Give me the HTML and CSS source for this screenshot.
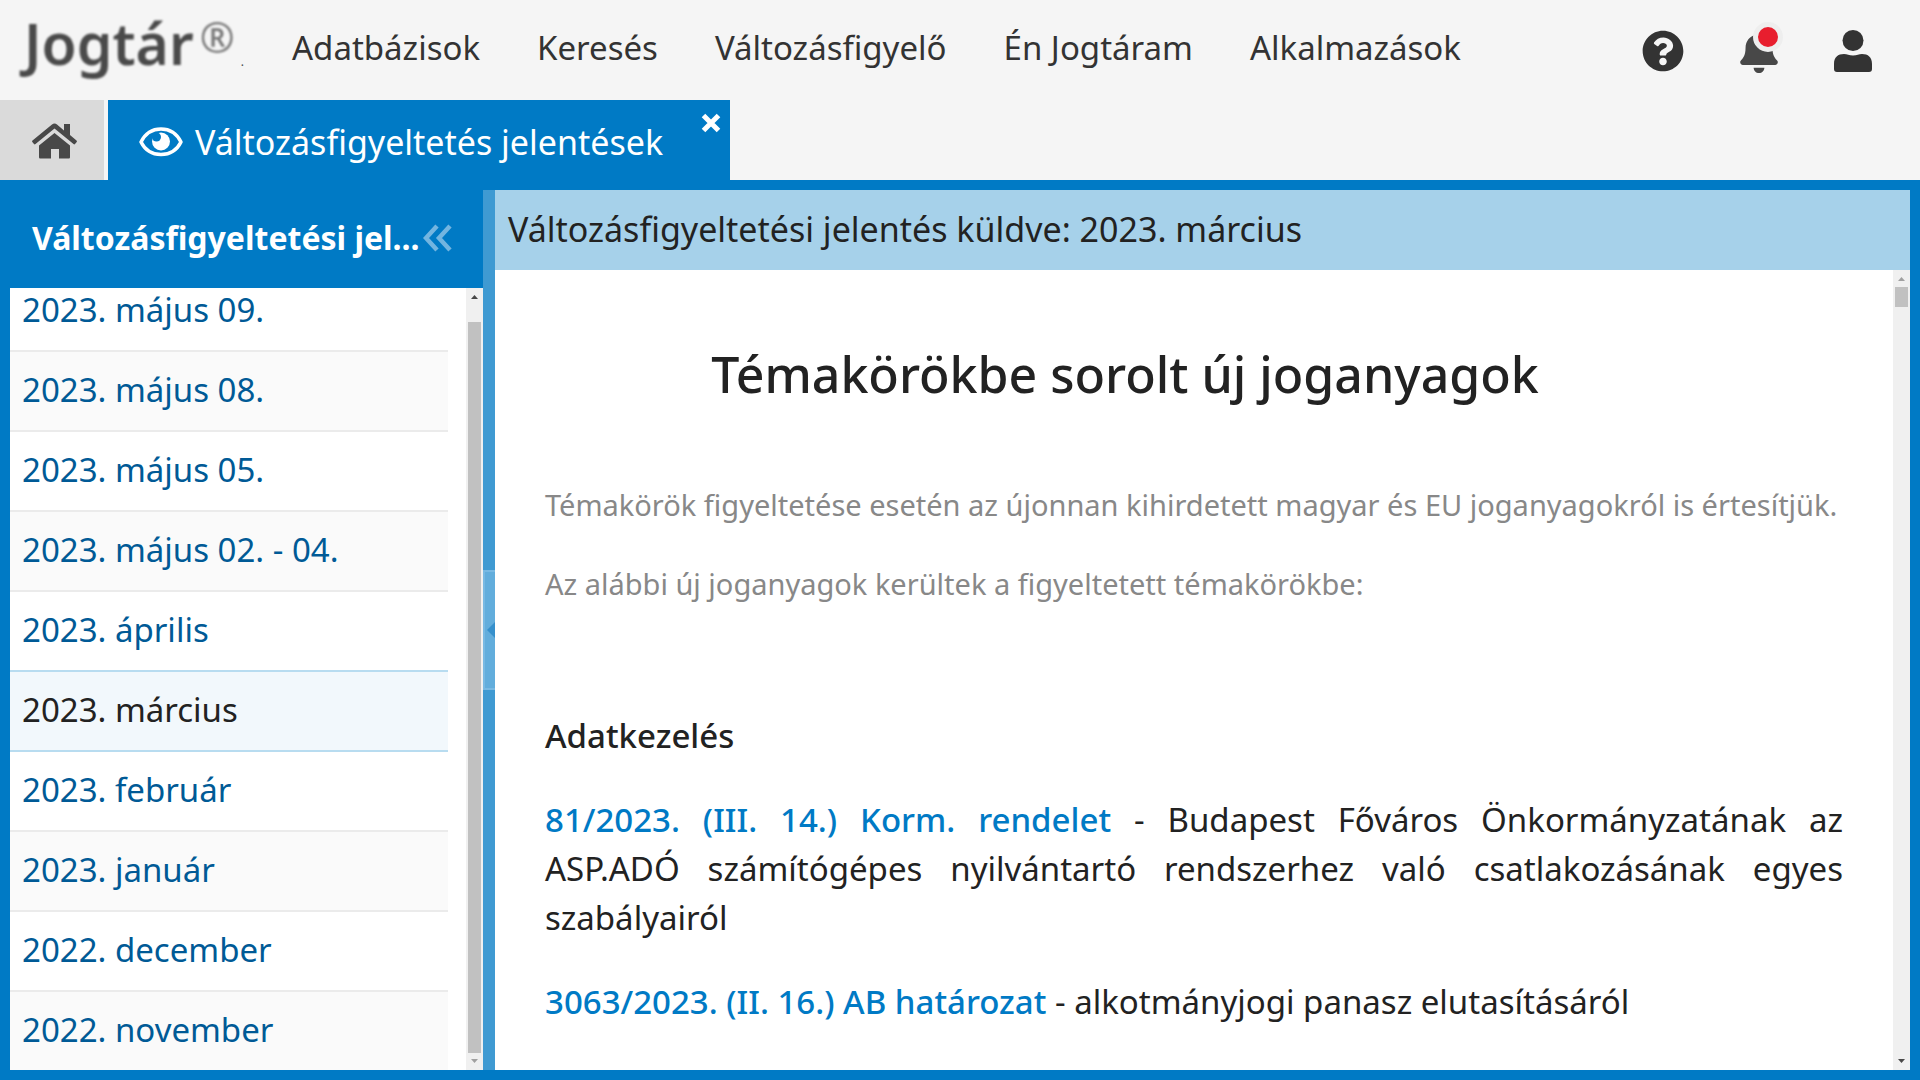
FILE: index.html
```html
<!DOCTYPE html>
<html lang="hu">
<head>
<meta charset="utf-8">
<title>Jogtár – Változásfigyeltetés jelentések</title>
<link rel="stylesheet" href="styles.css">
</head>
<body>
<header class="topbar">
  <a class="logo" href="#"><span class="logo-name">Jogtár</span><span class="logo-mark">®</span><span class="logo-dot">.</span></a>
  <nav class="menu">
    <a href="#">Adatbázisok</a>
    <a href="#">Keresés</a>
    <a href="#">Változásfigyelő</a>
    <a href="#">Én Jogtáram</a>
    <a href="#">Alkalmazások</a>
  </nav>
  <div class="tools">
    <button class="tool" type="button" aria-label="Súgó">
      <svg width="42" height="42" viewBox="0 0 512 512"><path fill="#333" d="M504 256c0 137-111 248-248 248S8 393 8 256 119 8 256 8s248 111 248 248zM262.700 90c-54.500 0-89.300 23-116.500 63.800-3.500 5.300-2.400 12.400 2.700 16.300l34.700 26.300c5.200 3.900 12.600 3 16.700-2.100 17.900-22.700 30.100-35.800 57.300-35.800 20.400 0 45.700 13.100 45.700 33 0 15-12.400 22.700-32.500 34C247.100 238.500 216 254.900 216 296v4c0 6.600 5.400 12 12 12h56c6.600 0 12-5.400 12-12v-1.300c0-28.500 83.200-29.600 83.200-106.700 0-58-60.200-102-116.500-102zM256 338c-25.400 0-46 20.600-46 46s20.600 46 46 46 46-20.600 46-46-20.600-46-46-46z"/></svg>
    </button>
    <button class="tool" type="button" aria-label="Értesítések">
      <svg width="38" height="43" viewBox="0 0 448 512"><path fill="#484848" d="M224 512c35.300 0 63.900-28.600 63.900-64H160.100c0 35.400 28.600 64 63.900 64zm215.400-149.700c-19.300-20.800-55.500-52-55.500-154.300 0-77.700-54.500-139.900-127.900-155.200V32c0-17.700-14.300-32-32-32s-32 14.300-32 32v20.800C118.600 68.100 64.100 130.300 64.100 208c0 102.300-36.200 133.500-55.500 154.300-6 6.400-8.700 14.100-8.600 21.700.1 16.400 13 32 32.100 32h383.800c19.100 0 32-15.600 32.100-32 .1-7.600-2.600-15.300-8.600-21.700z"/><path fill="#f5f5f5" d="M0 416h448v26H0z"/></svg>
      <span class="badge"></span>
    </button>
    <button class="tool" type="button" aria-label="Profil">
      <svg width="38" height="42" viewBox="0 0 38 42"><g fill="#333"><circle cx="19" cy="10.500" r="10.500"/><path d="M0 36v-2c0-7 4-10 10-10 3 0 5 1.500 9 1.500s6-1.500 9-1.500c6 0 10 3 10 10v5c0 2-1 3-3 3H3c-2 0-3-1-3-3z"/></g></svg>
    </button>
  </div>
</header>
<div class="tabs">
  <a class="tab-home" href="#" aria-label="Kezdőlap">
    <svg width="45" height="36" viewBox="0 0 45 36"><g fill="#484848"><path d="M22.500 10 38 22.500V34c0 1-.5 1.500-1.500 1.500H27V26h-8v9.500H8.500C7.500 35.500 7 35 7 34V22.500z"/><path d="M32 1h6v11l6.500 5.500c.6.500.6 1 .2 1.500l-1.700 2c-.4.500-1 .5-1.500 0L22.500 5.500 3.500 21c-.5.500-1.100.5-1.500 0l-1.700-2c-.4-.5-.4-1 .2-1.500L20 1.400c1.500-1.200 3.500-1.200 5 0l7 6z"/></g></svg>
  </a>
  <div class="tab">
    <svg width="44" height="30" viewBox="0 0 44 30"><path d="M2 15C6 7 13 2 22 2s16 5 20 13c-4 8-11 12.500-20 12.500S6 23 2 15z" fill="none" stroke="#fff" stroke-width="3.500" stroke-linejoin="round"/><circle cx="22" cy="14.500" r="9" fill="#fff"/><circle cx="17.500" cy="10" r="4.500" fill="#007ac5"/></svg>
    <span>Változásfigyeltetés jelentések</span>
    <button class="tab-close" type="button" aria-label="Bezárás"><svg width="20" height="20" viewBox="0 0 20 20"><path d="M2.500 2.500l15 15M17.500 2.500l-15 15" stroke="#fff" stroke-width="5"/></svg></button>
  </div>
</div>
<div class="frame">
  <aside class="sidebar">
    <div class="sidebar-head">
      <h2>Változásfigyeltetési jel...</h2>
      <button class="collapse" type="button" aria-label="Összecsukás"><svg width="30" height="28" viewBox="0 0 30 28"><path d="M14 2 3 14l11 12M27 2 16 14l11 12" fill="none" stroke="#73b5e0" stroke-width="4.500"/></svg></button>
    </div>
    <div class="list-pane">
      <ul class="reports">
        <li><a href="#">2023. május 09.</a></li>
        <li><a href="#">2023. május 08.</a></li>
        <li><a href="#">2023. május 05.</a></li>
        <li><a href="#">2023. május 02. - 04.</a></li>
        <li class="above"><a href="#">2023. április</a></li>
        <li class="current"><a href="#">2023. március</a></li>
        <li><a href="#">2023. február</a></li>
        <li><a href="#">2023. január</a></li>
        <li><a href="#">2022. december</a></li>
        <li><a href="#">2022. november</a></li>
      </ul>
      <div class="scroll scroll-end">
        <svg class="arrow" width="7" height="4" viewBox="0 0 7 4"><path d="M0 4 3.500 0 7 4z"/></svg>
        <div class="thumb"></div>
        <svg class="arrow dim" width="7" height="4" viewBox="0 0 7 4"><path d="M0 0h7L3.500 4z"/></svg>
      </div>
    </div>
  </aside>
  <div class="splitter">
    <button class="grip" type="button" aria-label="Panel elrejtése"><svg width="8" height="16" viewBox="0 0 8 16"><path d="M8 0v16L0 8z" fill="#3690cc"/></svg></button>
  </div>
  <main class="report">
    <div class="report-bar">Változásfigyeltetési jelentés küldve: 2023. március</div>
    <div class="report-pane">
      <article class="doc">
        <h1>Témakörökbe sorolt új joganyagok</h1>
        <p class="note">Témakörök figyeltetése esetén az újonnan kihirdetett magyar és EU joganyagokról is értesítjük.</p>
        <p class="note">Az alábbi új joganyagok kerültek a figyeltetett témakörökbe:</p>
        <h3>Adatkezelés</h3>
        <p class="item"><a href="#">81/2023. (III. 14.) Korm. rendelet</a> - Budapest Főváros Önkormányzatának az ASP.ADÓ számítógépes nyilvántartó rendszerhez való csatlakozásának egyes szabályairól</p>
        <p class="item"><a href="#">3063/2023. (II. 16.) AB határozat</a> - alkotmányjogi panasz elutasításáról</p>
      </article>
      <div class="scroll">
        <svg class="arrow dim" width="7" height="4" viewBox="0 0 7 4"><path d="M0 4 3.500 0 7 4z"/></svg>
        <div class="thumb"></div>
        <svg class="arrow" width="7" height="4" viewBox="0 0 7 4"><path d="M0 0h7L3.500 4z"/></svg>
      </div>
    </div>
  </main>
</div>
</body>
</html>
```
FILE: styles.css
```css
* { box-sizing: border-box; }
body {
  margin: 0;
  height: 100vh;
  display: flex;
  flex-direction: column;
  overflow: hidden;
  background: #f5f5f5;
  color: #222;
  font-family: "Noto Sans", "Open Sans", sans-serif;
  font-size: 33px;
  line-height: 48px;
}
a { color: inherit; text-decoration: none; }
button { padding: 0; border: 0; background: none; font: inherit; color: inherit; }
h1, h2, h3, p, ul { margin: 0; padding: 0; }
svg { display: block; }

.topbar { flex: none; display: flex; height: 100px; padding: 0 48px 0 24px; }
.logo { display: flex; gap: 6px; width: 268px; color: #4a4a4a; }
.logo-name { font-size: 57px; font-weight: 600; line-height: 86px; filter: blur(1px); }
.logo-mark { color: #777; font-size: 42px; line-height: 74px; filter: blur(1px); }
.logo-dot { font-size: 12px; line-height: 124px; }
.menu { display: flex; gap: 57px; color: #333; line-height: 96px; white-space: nowrap; }
.tools { display: flex; gap: 56px; margin-left: auto; padding-top: 2px; align-items: center; }
.tool { position: relative; }
.badge {
  position: absolute;
  top: -8px;
  right: -5px;
  width: 30px;
  height: 30px;
  border: 5px solid #eee;
  border-radius: 50%;
  background: #e81e2e;
}

.tabs { flex: none; display: flex; gap: 4px; height: 80px; }
.tab-home { display: flex; width: 104px; align-items: center; justify-content: center; padding: 2px 0 0 5px; background: #dadada; }
.tab { position: relative; display: flex; gap: 12px; align-items: center; padding: 4px 67px 0 31px; background: #007ac5; color: #fff; font-size: 34px; white-space: nowrap; }
.tab-close { position: absolute; top: 13px; right: 9px; }

.frame { flex: 1; min-height: 0; display: flex; padding: 10px; background: #007ac5; }
.sidebar { flex: none; display: flex; flex-direction: column; width: 473px; }
.sidebar-head { flex: none; display: flex; gap: 4px; align-items: center; height: 98px; padding: 0 30px 3px 22px; color: #fff; }
.sidebar-head h2 { flex: 1; min-width: 0; white-space: nowrap; font-size: 32px; font-weight: 700; }
.list-pane { flex: 1; min-height: 0; display: flex; justify-content: space-between; background: #fff; overflow: hidden; }
.reports { width: 438px; margin-top: -16px; list-style: none; color: #005a96; }
.reports li { height: 80px; padding: 0 12px; border-bottom: 2px solid #ebebeb; line-height: 76px; }
.reports li:nth-child(even) { background: #fafafa; }
.reports .above { border-color: #b8dcf0; }
.reports .current, .reports .current:nth-child(even) { border-color: #b8dcf0; background: #f2f8fc; color: #222; }

.scroll { flex: none; display: flex; flex-direction: column; align-items: center; width: 17px; padding: 7px 0; background: #f0f0f0; }
.arrow { flex: none; fill: #484848; }
.arrow.dim { fill: #a0a0a0; }
.thumb { width: 13px; height: 20px; margin: 6px 0 auto; background: #c1c1c1; }
.scroll-end .thumb { flex: 1; margin: 23px 0 6px; }

.splitter { flex: none; display: flex; flex-direction: column; justify-content: center; width: 12px; background: #3f9ad2; }
.grip { display: flex; align-items: center; justify-content: flex-end; height: 120px; border: 2px solid #78b9e3; border-right: 0; background: #62addc; }

.report { flex: 1; min-width: 0; display: flex; flex-direction: column; background: #fff; }
.report-bar { flex: none; height: 80px; padding: 0 13px; background: #a6d1ea; font-size: 34px; line-height: 78px; }
.report-pane { flex: 1; min-height: 0; display: flex; overflow: hidden; }
.doc { flex: 1; min-width: 0; padding: 64px 50px 0; text-align: justify; }
.doc h1 { padding-right: 138px; font-size: 50px; font-weight: 500; line-height: 80px; text-align: center; }
.note { margin-top: 31px; color: #888; font-size: 29px; text-align: left; }
h1 + .note { margin-top: 67px; }
.doc h3 { margin-top: 104px; font-size: 33px; font-weight: 500; }
.item { margin-top: 35px; line-height: 49px; }
.item a { color: #007ac5; font-weight: 500; }
```
